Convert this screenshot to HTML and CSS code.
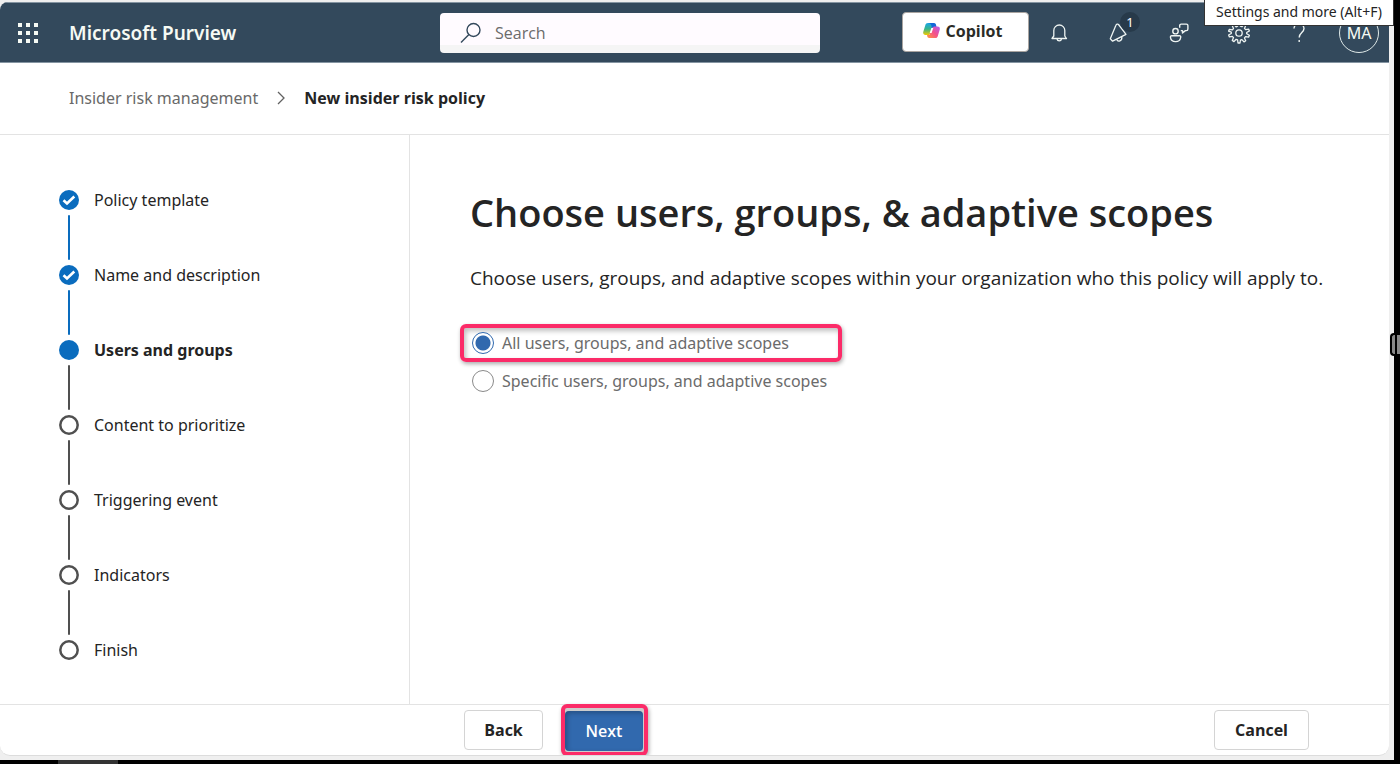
FILE: index.html
```html
<!DOCTYPE html>
<html lang="en">
<head>
<meta charset="utf-8">
<meta name="viewport" content="width=device-width, initial-scale=1">
<title>New insider risk policy - Microsoft Purview</title>
<link rel="stylesheet" href="styles.css">
</head>
<body>
<div class="frame">
  <div class="window">
    <header class="topbar">
      <button class="icon-btn waffle" aria-label="App launcher">
        <svg width="20" height="20" viewBox="0 0 20 20" fill="#f6faf4"><path d="M0 0h4v4H0zM8 0h4v4H8zM16 0h4v4h-4zM0 8h4v4H0zM8 8h4v4H8zM16 8h4v4h-4zM0 16h4v4H0zM8 16h4v4H8zM16 16h4v4h-4z"/></svg>
      </button>
      <a class="brand" href="#">Microsoft Purview</a>
      <label class="search">
        <svg width="22" height="22" viewBox="0 0 22 22" fill="none" stroke="#33495c" stroke-width="1.4"><circle cx="13.500" cy="8" r="6.500"/><path d="M8.900 12.600 1 20.500"/></svg>
        <input type="search" placeholder="Search" aria-label="Search">
      </label>
      <button class="copilot">
        <svg width="17" height="17" viewBox="0 0 17 17">
          <defs>
            <linearGradient id="ca" x1="0" y1="0" x2="0" y2="1"><stop offset="0" stop-color="#1aa5e8"/><stop offset=".5" stop-color="#37b58a"/><stop offset="1" stop-color="#f3c900"/></linearGradient>
            <linearGradient id="cb" x1="1" y1="0" x2="0" y2="1"><stop offset="0" stop-color="#b35cf0"/><stop offset=".5" stop-color="#f5508b"/><stop offset="1" stop-color="#ff9a3d"/></linearGradient>
          </defs>
          <path fill="url(#ca)" d="M5 1h6L9.500 4.500 7 11.500c-.4 1-1 1.500-2 1.500H2.500C.5 13-.2 11.600.3 9.800L2.300 3.200C2.700 1.800 3.600 1 5 1z"/>
          <path fill="#1267d8" d="M5.500 1H11c1.200 0 1.700.7 2 1.800l.6 2.400H11c-1 0-1.700.6-2 1.500C8.600 4 8.300 1.500 5.500 1z"/>
          <path fill="url(#cb)" d="M12 4.500h2.500c2 0 2.700 1.400 2.200 3.200l-1.800 6c-.4 1.500-1.200 2.300-2.400 2.300H6.300C4.800 16 4.200 14.800 4 13h1c1 0 1.700-.5 2-1.500l2.200-5.300c.4-1.100 1.300-1.700 2.800-1.700z"/>
          <path fill="#fff" d="M8.400 6h1.900L8.600 11H6.700z"/>
        </svg>
        Copilot
      </button>
      <nav class="tools" aria-label="Account tools">
        <button class="icon-btn" aria-label="Notifications">
          <svg width="18" height="20" viewBox="0 0 18 20" fill="none" stroke="#eef4f2" stroke-width="1.3" stroke-linejoin="round"><path d="M2 15.500h14.500L14.800 13V7.500a5.500 5.500 0 0 0-11 0V13z"/><path d="M7 16a2.300 2.300 0 0 0 4.500 0"/></svg>
        </button>
        <button class="icon-btn alerts" aria-label="Announcements, 1 new">
          <svg width="20" height="20" viewBox="0 0 20 20" fill="none" stroke="#eef4f2" stroke-width="1.300" stroke-linejoin="round"><path d="M9.500 1.500 17 11.300 3.600 18.200 1.300 15.800 6.800 2.500C7.300 1.200 8.700.6 9.500 1.500z"/><path d="M7.500 16.300c1.300 3 6 2.200 5.300-2.700"/></svg>
          <span class="badge">1</span>
        </button>
        <button class="icon-btn" aria-label="Feedback">
          <svg width="20" height="20" viewBox="0 0 20 20" fill="none" stroke="#eef4f2" stroke-width="1.400" stroke-linejoin="round"><circle cx="6.500" cy="8.200" r="2.700"/><path d="M2.800 12.700h7.600c1 0 1.500.7 1.300 1.800-.4 2.600-2.400 4.100-5.100 4.100s-4.800-1.500-5.100-4.100c-.2-1.100.3-1.800 1.300-1.800z"/><path d="M10.700 4.800V2.600c0-1 .6-1.500 1.500-1.500h5.200c.9 0 1.500.6 1.500 1.500V6c0 1-.6 1.600-1.500 1.600h-1l-2.900 2.400V7.600h-1.700"/></svg>
        </button>
        <button class="icon-btn" aria-label="Settings">
          <svg width="22" height="22" viewBox="0 0 22 22" fill="none" stroke="#eef4f2" stroke-width="1.300" stroke-linejoin="round"><circle cx="11" cy="11" r="3.200"/><path d="M9.600 4.100 10 1h2l.4 3.100 1.500.6 2.100-2.300 1.700 1.200-1.200 2.800 1.100 1.300 3-.6.800 1.800-2.700 1.600v1.300l2.700 1.500-.8 1.900-3-.6-1.100 1.300 1.200 2.800-1.700 1.200-2.100-2.300-1.500.6L12 21h-2l-.4-3.100-1.500-.6L6 19.600l-1.700-1.200 1.200-2.800-1.100-1.300-3 .6-.8-1.900 2.700-1.500v-1.300L.6 9.100l.8-1.800 3 .6 1.100-1.300-1.200-2.800L6 2.600l2.100 2.300z"/></svg>
        </button>
        <button class="icon-btn" aria-label="Help">
          <svg width="14" height="20" viewBox="0 0 14 20" fill="none" stroke="#eef4f2" stroke-width="1.400"><path d="M2 5.500C2 2.800 4.200 1 7 1s5 1.800 5 4.500c0 4-4.800 4-4.800 9M7.200 17v2"/></svg>
        </button>
        <button class="avatar" aria-label="Account manager">MA</button>
      </nav>
    </header>

    <nav class="crumbs" aria-label="Breadcrumb">
      <a href="#">Insider risk management</a>
      <svg width="8" height="14" viewBox="0 0 8 14" fill="none" stroke="#616161" stroke-width="1.300"><path d="M1 1l6 6-6 6"/></svg>
      <span class="current" aria-current="page">New insider risk policy</span>
    </nav>

    <div class="body">
      <ol class="steps">
        <li class="step done"><svg class="dot" viewBox="0 0 20 20"><circle cx="10" cy="10" r="10" fill="#0a6cbe"/><path d="M4.500 10.200l3.500 3.300L15.300 6.500" fill="none" stroke="#fff" stroke-width="2.600"/></svg><span>Policy template</span></li>
        <li class="step done"><svg class="dot" viewBox="0 0 20 20"><circle cx="10" cy="10" r="10" fill="#0a6cbe"/><path d="M4.500 10.200l3.500 3.300L15.300 6.500" fill="none" stroke="#fff" stroke-width="2.600"/></svg><span>Name and description</span></li>
        <li class="step active" aria-current="step"><svg class="dot" viewBox="0 0 20 20"><circle cx="10" cy="10" r="10" fill="#0a6cbe"/></svg><span>Users and groups</span></li>
        <li class="step"><svg class="dot" viewBox="0 0 20 20"><circle cx="10" cy="10" r="8.700" fill="#fff" stroke="#505050" stroke-width="2.500"/></svg><span>Content to prioritize</span></li>
        <li class="step"><svg class="dot" viewBox="0 0 20 20"><circle cx="10" cy="10" r="8.700" fill="#fff" stroke="#505050" stroke-width="2.500"/></svg><span>Triggering event</span></li>
        <li class="step"><svg class="dot" viewBox="0 0 20 20"><circle cx="10" cy="10" r="8.700" fill="#fff" stroke="#505050" stroke-width="2.500"/></svg><span>Indicators</span></li>
        <li class="step"><svg class="dot" viewBox="0 0 20 20"><circle cx="10" cy="10" r="8.700" fill="#fff" stroke="#505050" stroke-width="2.500"/></svg><span>Finish</span></li>
      </ol>

      <main class="content">
        <h1>Choose users, groups, &amp; adaptive scopes</h1>
        <p>Choose users, groups, and adaptive scopes within your organization who this policy will apply to.</p>
        <div class="options" role="radiogroup" aria-label="Policy scope">
          <label class="option marked"><input type="radio" name="scope" checked>All users, groups, and adaptive scopes</label>
          <label class="option"><input type="radio" name="scope">Specific users, groups, and adaptive scopes</label>
        </div>
      </main>
    </div>

    <footer class="actions">
      <button class="btn">Back</button>
      <span class="next-mark"><button class="btn primary">Next</button></span>
      <button class="btn cancel">Cancel</button>
    </footer>
  </div>
  <div class="tooltip" role="tooltip">Settings and more (Alt+F)</div>
  <div class="handle"></div>
</div>
<div class="taskbar"><span class="task"></span></div>
</body>
</html>
```
FILE: styles.css
```css
* { box-sizing: border-box; }

body {
  margin: 0;
  min-height: 100vh;
  display: flex;
  flex-direction: column;
  overflow: hidden;
  background: #000;
  color: #242424;
  font-family: "Noto Sans", "Open Sans", sans-serif;
  font-size: 16px;
  line-height: 24px;
}

button, input { font: inherit; color: inherit; }

.frame {
  position: relative;
  flex: 1;
  display: flex;
  margin-right: 6px;
  padding: 2px 5px 4px 0;
  background: #efefef;
}

.window {
  flex: 1;
  min-width: 0;
  display: flex;
  flex-direction: column;
  overflow: hidden;
  border-bottom: 1px solid #dcdcdc;
  border-radius: 8px 0 10px 10px;
  background: #fff;
}

.topbar {
  display: flex;
  align-items: center;
  height: 61px;
  padding: 0 10px 0 8px;
  border-top: 1px solid #8595a2;
  border-bottom: 1px solid #8595a2;
  background: #33495c;
  color: #f6faf4;
}

.icon-btn {
  display: flex;
  align-items: center;
  justify-content: center;
  width: 40px;
  height: 40px;
  padding: 0;
  border: 0;
  background: none;
}

.brand {
  width: 371px;
  margin-left: 21px;
  color: #f6faf4;
  font-size: 19px;
  font-weight: 600;
  text-decoration: none;
}

.search {
  display: flex;
  align-items: center;
  gap: 13px;
  width: 380px;
  height: 40px;
  padding: 0 20px;
  border-radius: 4px;
  background: linear-gradient(#fffbff 0 32px, #f5f5f5 32px);
}

.search input {
  flex: 1;
  min-width: 0;
  padding: 0;
  border: 0;
  outline: 0;
  background: none;
  font-family: "Open Sans", "Noto Sans", sans-serif;
}

.search input::placeholder { color: #6b6b6b; opacity: 1; }

.copilot {
  display: flex;
  align-items: center;
  justify-content: center;
  gap: 6px;
  width: 127px;
  height: 40px;
  margin: 0 0 2px auto;
  padding: 0 6px 2px 0;
  border: 1px solid #a9a4a0;
  border-radius: 4px;
  background: #fff;
  color: #2b2b26;
  font-family: "Open Sans", "Noto Sans", sans-serif;
  font-weight: 700;
}

.tools {
  display: flex;
  align-items: center;
  gap: 20px;
  margin-left: 10px;
}

.alerts { position: relative; }

.badge {
  position: absolute;
  top: -1px;
  right: -1px;
  width: 20px;
  height: 20px;
  border-radius: 50%;
  background: #273a4a;
  color: #fff;
  font-size: 13px;
  line-height: 20px;
  text-align: center;
}

.avatar {
  width: 40px;
  height: 40px;
  padding: 0;
  border: 1px solid #dfe9e8;
  border-radius: 50%;
  background: none;
}

.crumbs {
  display: flex;
  align-items: center;
  gap: 19px;
  height: 72px;
  padding: 0 69px 2px;
  border-bottom: 1px solid #e3e3e3;
}

.crumbs a { color: #696969; text-decoration: none; }

.current {
  font-family: "Open Sans", "Noto Sans", sans-serif;
  font-weight: 700;
}

.body { flex: 1; display: flex; }

.steps {
  width: 410px;
  margin: 0;
  padding: 53px 59px 0;
  border-right: 1px solid #e3e3e3;
  list-style: none;
}

.step {
  position: relative;
  display: flex;
  align-items: flex-start;
  gap: 15px;
  height: 75px;
}

.step:last-child { height: 24px; }

.dot { width: 20px; height: 20px; margin-top: 2px; }

.step:not(:last-child)::after {
  content: "";
  position: absolute;
  top: 27px;
  bottom: 3px;
  left: 9px;
  width: 2px;
  border-radius: 1px;
  background: #505050;
}

.step.done::after { background: #0a6cbe; }

.step.active { font-weight: 700; }

.content { flex: 1; min-width: 0; padding: 51px 60px 0; }

h1 {
  margin: 0;
  font-family: "Open Sans", "Noto Sans", sans-serif;
  font-size: 38px;
  font-weight: 600;
  line-height: 52px;
}

.content p {
  margin: 26px 0 0;
  font-family: "Open Sans", "Noto Sans", sans-serif;
  font-size: 19px;
  line-height: 28px;
}

.options {
  display: flex;
  flex-direction: column;
  align-items: flex-start;
  margin: 32px 0 0 -10px;
}

.option {
  display: flex;
  align-items: center;
  gap: 8px;
  height: 38px;
  padding: 0 12px;
  color: #6b6b6b;
}

.option.marked {
  width: 382px;
  padding: 0 8px;
  border: 4px solid #fb2b68;
  border-radius: 6px;
  box-shadow: 1px 2px 4px #00000055, inset 2px 3px 5px #00000040;
}

.option input {
  appearance: none;
  width: 22px;
  height: 22px;
  margin: 0;
  border: 1px solid #8a8a8a;
  border-radius: 50%;
  background: #fff;
}

.option input:checked {
  border-color: #3169ae;
  background: radial-gradient(circle, #3169ae 0 7px, #fff 8px);
}

.actions {
  display: flex;
  align-items: center;
  height: 51px;
  padding: 0 80px 0 464px;
  border-top: 1px solid #e3e3e3;
}

.btn {
  min-width: 79px;
  height: 40px;
  padding: 0 18px;
  border: 1px solid #d4d4d4;
  border-radius: 4px;
  background: #fff;
  font-family: "Open Sans", "Noto Sans", sans-serif;
  font-weight: 700;
}

.next-mark {
  display: flex;
  margin-left: 18px;
  padding: 3px 1px 1px 0;
  border: 4px solid #fb2b68;
  border-radius: 6px;
  background: #ccc;
  box-shadow: 1px 2px 4px #00000055;
}

.btn.primary {
  min-width: 78px;
  border: 0;
  background: #3169ae;
  box-shadow: inset 2px 2px 5px #00000040;
  color: #fff;
  font-weight: 600;
}

.btn.cancel { min-width: 95px; margin-left: auto; }

.tooltip {
  position: absolute;
  top: -1px;
  right: 0;
  width: 190px;
  height: 27px;
  border: 1px solid #333;
  background: #fff;
  font-size: 14px;
  line-height: 23px;
  text-align: center;
}

.handle {
  position: absolute;
  top: 333px;
  right: -6px;
  width: 10px;
  height: 23px;
  border: 2px solid #000;
  border-right: 0;
  border-radius: 4px 0 0 4px;
  background: linear-gradient(90deg, #888 0 3px, #000 3px 5px, #888 5px);
}

.taskbar { display: flex; height: 4px; padding-left: 58px; }

.task { width: 60px; background: #333; }
```
